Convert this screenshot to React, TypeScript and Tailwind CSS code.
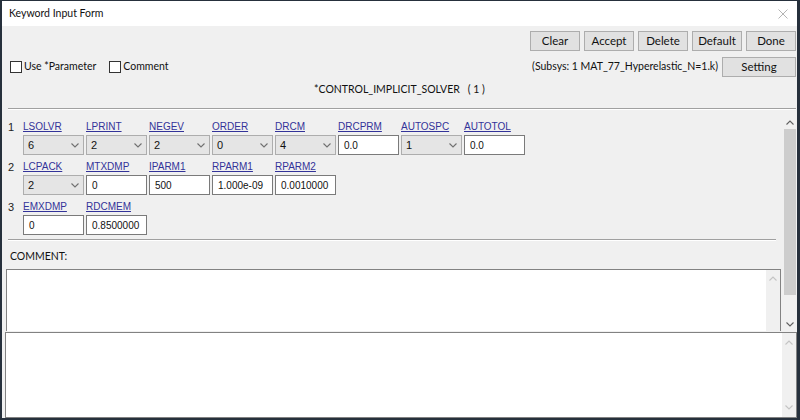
const ui = "font-['Lato',sans-serif]";
const ms = "font-['Liberation_Sans',Arial,sans-serif]";

type Field = { label: string; value: string; combo?: boolean };

const rows: Field[][] = [
  [
    { label: "LSOLVR", value: "6", combo: true },
    { label: "LPRINT", value: "2", combo: true },
    { label: "NEGEV", value: "2", combo: true },
    { label: "ORDER", value: "0", combo: true },
    { label: "DRCM", value: "4", combo: true },
    { label: "DRCPRM", value: "0.0" },
    { label: "AUTOSPC", value: "1", combo: true },
    { label: "AUTOTOL", value: "0.0" },
  ],
  [
    { label: "LCPACK", value: "2", combo: true },
    { label: "MTXDMP", value: "0" },
    { label: "IPARM1", value: "500" },
    { label: "RPARM1", value: "1.000e-09" },
    { label: "RPARM2", value: "0.0010000" },
  ],
  [
    { label: "EMXDMP", value: "0" },
    { label: "RDCMEM", value: "0.8500000" },
  ],
];

function Chevron({ up, color = "#555" }: { up?: boolean; color?: string }) {
  return (
    <svg width="8" height="5" viewBox="0 0 8 5" className="block">
      <path
        d={up ? "M0.5 4.5 L4 1 L7.5 4.5" : "M0.5 0.5 L4 4 L7.5 0.5"}
        fill="none"
        stroke={color}
        strokeWidth="1.1"
      />
    </svg>
  );
}

function Button({ label, wide }: { label: string; wide?: boolean }) {
  return (
    <div
      className={`${wide ? "w-[74px]" : "w-[50px]"} h-[20px] flex items-center justify-center bg-[#e1e1e1] border border-[#adadad] text-[11.5px] text-[#111]`}
    >
      {label}
    </div>
  );
}

function Checkbox({ label }: { label: string }) {
  return (
    <div className="flex items-center gap-[2px]">
      <div className="w-[12px] h-[12px] bg-white border border-[#333]" />
      <span className="text-[10.5px] text-[#111]">{label}</span>
    </div>
  );
}

function Input({ field }: { field: Field }) {
  if (field.combo) {
    return (
      <div className="w-[61px] h-[20px] flex items-center justify-between bg-[#e5e5e5] border border-[#adadad] pl-[4px] pr-[4px]">
        <span className="text-[11px] text-[#111]">{field.value}</span>
        <Chevron color="#707070" />
      </div>
    );
  }
  return (
    <div className="w-[61px] h-[20px] flex items-center bg-white border border-[#7a7a7a] pl-[5px] text-[10px] text-[#111]">
      {field.value}
    </div>
  );
}

function ScrollTrack({ light }: { light?: boolean }) {
  return (
    <div className="w-[14px] h-full flex flex-col items-center justify-between py-[7px] bg-[#f0f0f0]">
      <Chevron up color={light ? "#c4c4c4" : "#606060"} />
      <Chevron color={light ? "#c4c4c4" : "#606060"} />
    </div>
  );
}

export default function App() {
  return (
    <div
      className={`${ui} w-[800px] h-[420px] flex flex-col bg-[#f0f0f0] border-t border-l-2 border-r-[3px] border-b-2 border-[#26303c] overflow-hidden`}
    >
      {/* Title bar */}
      <div className="h-[25px] shrink-0 bg-white flex items-center justify-between pl-[7px] pr-[9px]">
        <span className="text-[10.5px] text-[#111]">Keyword Input Form</span>
        <svg width="10" height="10" viewBox="0 0 10 10">
          <path d="M0.5 0.5 L9.5 9.5 M9.5 0.5 L0.5 9.5" stroke="#b4b4b4" strokeWidth="1" />
        </svg>
      </div>

      {/* Toolbar */}
      <div className="mt-[5px] h-[20px] shrink-0 flex justify-end gap-[4px] pr-[1px]">
        {["Clear", "Accept", "Delete", "Default", "Done"].map((b) => (
          <Button key={b} label={b} />
        ))}
      </div>

      <div className="mt-[6px] h-[20px] shrink-0 flex items-center justify-between pl-[8px] pr-[1px]">
        <div className="flex items-center gap-[13px]">
          <Checkbox label="Use *Parameter" />
          <Checkbox label="Comment" />
        </div>
        <div className="flex items-center gap-[4px]">
          <span className="text-[10.5px] text-[#111]">(Subsys: 1 MAT_77_Hyperelastic_N=1.k)</span>
          <Button label="Setting" wide />
        </div>
      </div>

      <div className="mt-[3px] h-[20px] shrink-0 flex items-center justify-center text-[10.5px] text-[#111] whitespace-pre">
        {"*CONTROL_IMPLICIT_SOLVER   ( 1 )"}
      </div>

      <div className="mt-[8px] ml-[6px] mr-[1px] shrink-0 border-t border-[#a0a0a0] border-b border-b-white" />

      {/* Card area */}
      <div className="h-[221px] shrink-0 flex overflow-hidden">
        <div className="flex-1 flex flex-col pt-[5px] overflow-hidden">
          {rows.map((row, i) => (
            <div key={i} className={`${ms} h-[40px] shrink-0 flex`}>
              <span className="w-[21px] pl-[6px] pt-[3px] leading-[18px] text-[11px] text-[#222]">
                {i + 1}
              </span>
              <div className="flex gap-[2px]">
                {row.map((f) => (
                  <div key={f.label} className="w-[61px] flex flex-col">
                    <span className="h-[20px] pt-[3px] leading-[18px] text-[10px] text-[#333399] underline">
                      {f.label}
                    </span>
                    <Input field={f} />
                  </div>
                ))}
              </div>
            </div>
          ))}

          <div className="mt-[4px] ml-[6px] mr-[7px] shrink-0 border-t border-[#a0a0a0] border-b border-b-white" />

          <div className="mt-[6px] h-[20px] shrink-0 flex items-center pl-[8px] text-[10.5px] text-[#111]">
            COMMENT:
          </div>

          <div className="mt-[2px] ml-[4px] mr-[2px] h-[90px] shrink-0 flex justify-end bg-white border border-[#828282]">
            <div className="w-[14px] h-full flex flex-col items-center pt-[6px] bg-[#f0f0f0]">
              <Chevron up color="#c4c4c4" />
            </div>
          </div>
        </div>

        <div className="w-[14px] flex flex-col items-center pt-[10px] pb-[4px]">
          <Chevron up color="#606060" />
          <div className="mt-[4px] w-[12px] h-[166px] bg-[#cdcdcd]" />
          <div className="flex-1" />
          <Chevron color="#606060" />
        </div>
      </div>

      {/* Bottom text pane */}
      <div className="mt-[1px] ml-[3px] flex-1 flex justify-end bg-white border border-[#828282]">
        <ScrollTrack light />
      </div>
    </div>
  );
}
